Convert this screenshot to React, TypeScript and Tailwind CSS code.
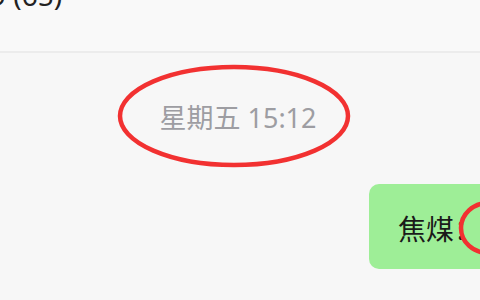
import React from 'react';

const font = { fontFamily: '"Noto Sans", "Noto Sans CJK SC", sans-serif' };

export default function App() {
  return (
    <div className="relative w-[480px] h-[300px] overflow-hidden bg-[#f7f7f7]" style={font}>
      {/* header */}
      <div className="h-[53px] bg-[#f9f9f9] border-b-2 border-[#ececec] overflow-hidden">
        <div className="-mt-[22px] -ml-[10px] text-[28px] leading-[34px] text-[#222]">9 (65)</div>
      </div>

      {/* time */}
      <div className="relative flex justify-center pt-[49px] pr-[4px]">
        <span className="text-[27px] leading-[32px] text-[#9d9da2]">星期五 15:12</span>
        <svg className="absolute left-[116px] top-[10px]" width="236" height="106" viewBox="0 0 236 106">
          <ellipse cx="118" cy="53" rx="114" ry="49" fill="none" stroke="#f23131" strokeWidth="4.5" />
        </svg>
      </div>

      {/* message */}
      <div className="flex mt-[50px] ml-[369px] w-[160px] shrink-0">
        <div className="h-[85px] w-full pl-[29px] flex items-center bg-[#9eee97] rounded-[10px]">
          <span className="text-[28px] leading-[34px] text-[#1a1a1a] pt-[4px] whitespace-nowrap">焦煤：</span>
        </div>
      </div>
      <svg className="absolute left-[458px] top-[200px]" width="60" height="56" viewBox="0 0 60 56">
        <ellipse cx="30" cy="28" rx="27" ry="25" fill="none" stroke="#f23131" strokeWidth="4.5" />
      </svg>
    </div>
  );
}
